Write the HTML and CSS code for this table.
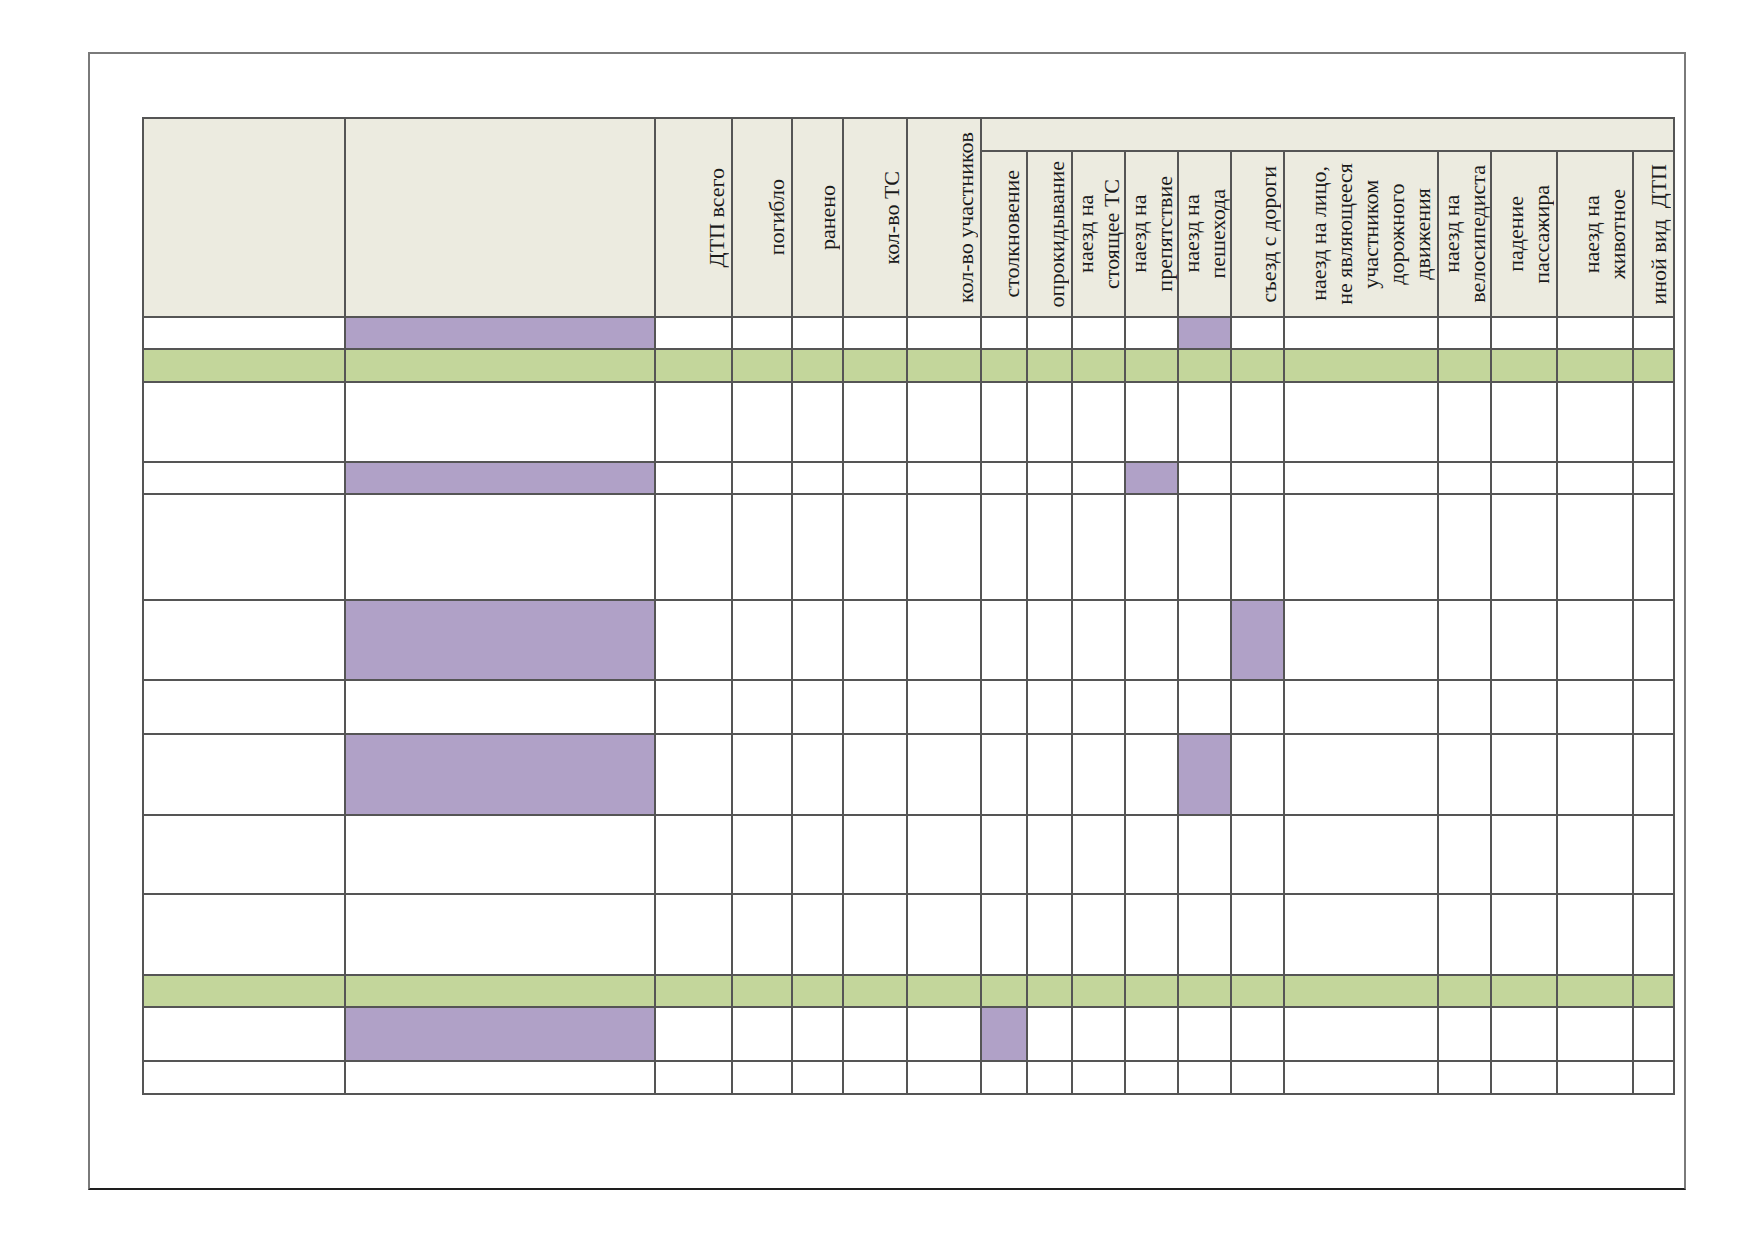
FILE: index.html
```html
<!DOCTYPE html>
<html lang="ru">
<head>
<meta charset="utf-8">
<title>ДТП</title>
<link rel="stylesheet" href="styles.css">
</head>
<body>
<div class="sheet">
  <table class="grid">
    <colgroup>
      <col class="c0"><col class="c1"><col class="c2"><col class="c3"><col class="c4"><col class="c5"><col class="c6">
      <col class="c7"><col class="c8"><col class="c9"><col class="c10"><col class="c11"><col class="c12"><col class="c13">
      <col class="c14"><col class="c15"><col class="c16"><col class="c17">
    </colgroup>
    <thead>
      <tr class="head r33">
        <th rowspan="2"></th>
        <th rowspan="2"></th>
        <th rowspan="2"><span class="vt">ДТП всего</span></th>
        <th rowspan="2"><span class="vt">погибло</span></th>
        <th rowspan="2"><span class="vt">ранено</span></th>
        <th rowspan="2"><span class="vt">кол-во ТС</span></th>
        <th rowspan="2"><span class="vt">кол-во участников</span></th>
        <th colspan="11"></th>
      </tr>
      <tr class="head r166">
        <th><span class="vt">столкновение</span></th>
        <th><span class="vt">опрокидывание</span></th>
        <th><span class="vt">наезд на<br>стоящее ТС</span></th>
        <th><span class="vt">наезд на<br>препятствие</span></th>
        <th><span class="vt">наезд на<br>пешехода</span></th>
        <th><span class="vt">съезд с дороги</span></th>
        <th><span class="vt">наезд на лицо,<br>не являющееся<br>участником<br>дорожного<br>движения</span></th>
        <th><span class="vt">наезд на<br>велосипедиста</span></th>
        <th><span class="vt">падение<br>пассажира</span></th>
        <th><span class="vt">наезд на<br>животное</span></th>
        <th><span class="vt">иной вид&nbsp; ДТП</span></th>
      </tr>
    </thead>
    <tbody>
      <tr class="r32"><td></td><td class="p"></td><td></td><td></td><td></td><td></td><td></td><td></td><td></td><td></td><td></td><td class="p"></td><td></td><td></td><td></td><td></td><td></td><td></td></tr>
      <tr class="r33 g"><td></td><td></td><td></td><td></td><td></td><td></td><td></td><td></td><td></td><td></td><td></td><td></td><td></td><td></td><td></td><td></td><td></td><td></td></tr>
      <tr class="r80"><td></td><td></td><td></td><td></td><td></td><td></td><td></td><td></td><td></td><td></td><td></td><td></td><td></td><td></td><td></td><td></td><td></td><td></td></tr>
      <tr class="r32"><td></td><td class="p"></td><td></td><td></td><td></td><td></td><td></td><td></td><td></td><td></td><td class="p"></td><td></td><td></td><td></td><td></td><td></td><td></td><td></td></tr>
      <tr class="r106"><td></td><td></td><td></td><td></td><td></td><td></td><td></td><td></td><td></td><td></td><td></td><td></td><td></td><td></td><td></td><td></td><td></td><td></td></tr>
      <tr class="r80"><td></td><td class="p"></td><td></td><td></td><td></td><td></td><td></td><td></td><td></td><td></td><td></td><td></td><td class="p"></td><td></td><td></td><td></td><td></td><td></td></tr>
      <tr class="r54"><td></td><td></td><td></td><td></td><td></td><td></td><td></td><td></td><td></td><td></td><td></td><td></td><td></td><td></td><td></td><td></td><td></td><td></td></tr>
      <tr class="r81"><td></td><td class="p"></td><td></td><td></td><td></td><td></td><td></td><td></td><td></td><td></td><td></td><td class="p"></td><td></td><td></td><td></td><td></td><td></td><td></td></tr>
      <tr class="r79"><td></td><td></td><td></td><td></td><td></td><td></td><td></td><td></td><td></td><td></td><td></td><td></td><td></td><td></td><td></td><td></td><td></td><td></td></tr>
      <tr class="r81"><td></td><td></td><td></td><td></td><td></td><td></td><td></td><td></td><td></td><td></td><td></td><td></td><td></td><td></td><td></td><td></td><td></td><td></td></tr>
      <tr class="r32 g"><td></td><td></td><td></td><td></td><td></td><td></td><td></td><td></td><td></td><td></td><td></td><td></td><td></td><td></td><td></td><td></td><td></td><td></td></tr>
      <tr class="r54"><td></td><td class="p"></td><td></td><td></td><td></td><td></td><td></td><td class="p"></td><td></td><td></td><td></td><td></td><td></td><td></td><td></td><td></td><td></td><td></td></tr>
      <tr class="r33"><td></td><td></td><td></td><td></td><td></td><td></td><td></td><td></td><td></td><td></td><td></td><td></td><td></td><td></td><td></td><td></td><td></td><td></td></tr>
    </tbody>
  </table>
</div>
</body>
</html>
```

FILE: styles.css
```css
html, body {
  margin: 0;
  padding: 0;
  background: #ffffff;
  font-family: "Liberation Serif", "Times New Roman", serif;
}

.sheet {
  box-sizing: border-box;
  width: 1598px;
  height: 1138px;
  margin: 52px 0 0 88px;
  border: 2px solid #7a7a7a;
  border-bottom-color: #1e1e1e;
  padding: 63px 0 0 52px;
}

.grid {
  border-collapse: collapse;
  table-layout: fixed;
  width: 1533px;
}

.grid th,
.grid td {
  border: 2px solid #555555;
  padding: 0;
  background: #ffffff;
}

.c0 { width: 202px; }
.c1 { width: 310px; }
.c2 { width: 77px; }
.c3 { width: 60px; }
.c4 { width: 51px; }
.c5 { width: 64px; }
.c6 { width: 74px; }
.c7 { width: 46px; }
.c8 { width: 45px; }
.c9 { width: 53px; }
.c10 { width: 53px; }
.c11 { width: 53px; }
.c12 { width: 53px; }
.c13 { width: 154px; }
.c14 { width: 53px; }
.c15 { width: 66px; }
.c16 { width: 76px; }
.c17 { width: 41px; }

.r32 { height: 32px; }
.r33 { height: 33px; }
.r54 { height: 54px; }
.r79 { height: 79px; }
.r80 { height: 80px; }
.r81 { height: 81px; }
.r106 { height: 106px; }
.r166 { height: 166px; }

.head th {
  background: #ecebe0;
  font-size: 0;
  line-height: 0;
  font-weight: normal;
  text-align: right;
  vertical-align: middle;
  padding-right: 1px;
}

.vt {
  display: inline-block;
  writing-mode: vertical-rl;
  transform: rotate(180deg);
  font-size: 22px;
  line-height: 26px;
  text-align: center;
  white-space: nowrap;
  color: #1a1a1a;
  vertical-align: top;
}

.grid td.p {
  background: #b0a1c7;
}

.grid tr.g td {
  background: #c3d69b;
}
```
